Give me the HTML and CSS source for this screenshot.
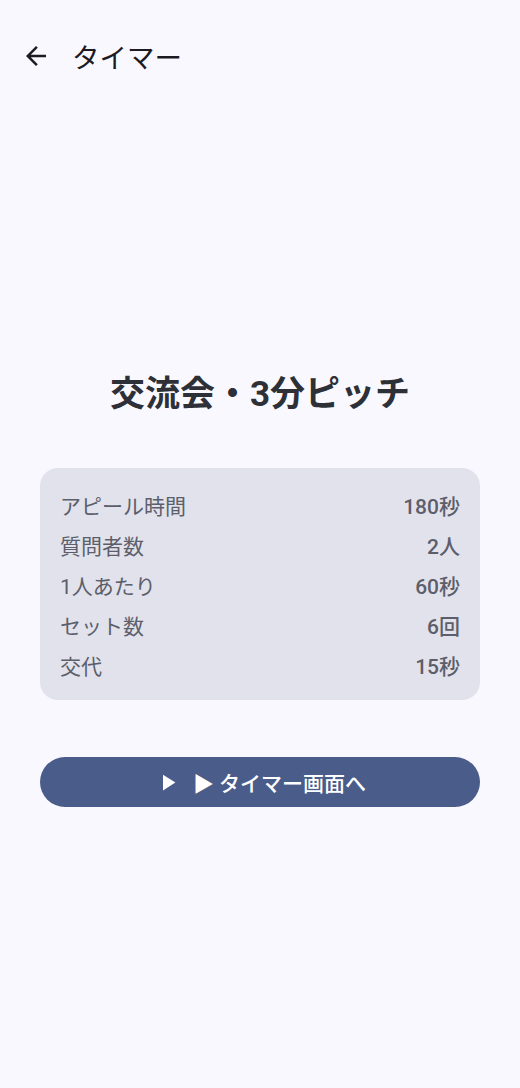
FILE: index.html
```html
<!DOCTYPE html>
<html lang="ja">
<head>
  <meta charset="UTF-8">
  <meta name="viewport" content="width=device-width, initial-scale=1.0">
  <title>タイマー</title>
  <link rel="stylesheet" href="styles.css">
</head>
<body>
  <header class="top-bar">
    <button class="back-button" aria-label="戻る">
      <svg viewBox="0 0 24 24" width="30" height="30">
        <path d="M20 11H7.83l5.59-5.59L12 4l-8 8 8 8 1.41-1.41L7.83 13H20v-2z" fill="currentColor"/>
      </svg>
    </button>
    <h1 class="top-bar-title">タイマー</h1>
  </header>

  <main class="content">
    <h2 class="preset-title">交流会・3分ピッチ</h2>

    <section class="summary-card">
      <div class="summary-row"><span>アピール時間</span><span class="value">180秒</span></div>
      <div class="summary-row"><span>質問者数</span><span class="value">2人</span></div>
      <div class="summary-row"><span>1人あたり</span><span class="value">60秒</span></div>
      <div class="summary-row"><span>セット数</span><span class="value">6回</span></div>
      <div class="summary-row"><span>交代</span><span class="value">15秒</span></div>
    </section>

    <button class="start-button">
      <svg viewBox="0 0 24 24" width="27" height="27">
        <path d="M8 5v14l11-7z" fill="currentColor"/>
      </svg>
      <span>▶ タイマー画面へ</span>
    </button>
  </main>
</body>
</html>
```

FILE: styles.css
```css
body {
  margin: 0;
  background-color: #faf8ff;
  color: #1b1b21;
  font-family: Roboto, "Noto Sans CJK JP", sans-serif;
}
.top-bar {
  display: flex;
  align-items: center;
  height: 112px;
  padding: 0 16px;
  box-sizing: border-box;
}
.back-button {
  display: flex;
  align-items: center;
  justify-content: center;
  width: 40px;
  height: 40px;
  padding: 0;
  border: none;
  background: none;
  color: #1b1b21;
}
.top-bar-title {
  margin: 0 0 0 16px;
  font-size: 27.5px;
  font-weight: 400;
  color: #1b1b21;
}
.content {
  padding: 260px 40px 0;
  display: flex;
  flex-direction: column;
}
.preset-title {
  margin: 0;
  text-align: center;
  font-size: 35px;
  line-height: 46px;
  font-weight: 700;
  color: #2e3038;
}
.summary-card {
  margin-top: 50px;
  padding: 17px 20px 15px;
  background-color: #e2e2ec;
  border-radius: 18px;
}
.summary-row {
  display: flex;
  justify-content: space-between;
  align-items: center;
  height: 40px;
  font-size: 21px;
  color: #5c5f6b;
}
.summary-row .value {
  font-weight: 500;
}
.start-button {
  margin-top: 57px;
  height: 50px;
  display: flex;
  align-items: center;
  justify-content: center;
  gap: 12px;
  border: none;
  border-radius: 25px;
  background-color: #4a5c8a;
  color: #fff;
  font-family: inherit;
  font-size: 21px;
  font-weight: 500;
}
```
